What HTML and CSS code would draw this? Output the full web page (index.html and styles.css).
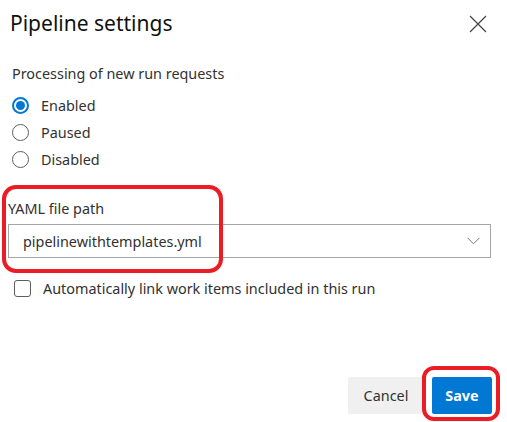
FILE: index.html
```html
<!DOCTYPE html>
<html>
<head>
<meta charset="utf-8">
<link rel="stylesheet" href="styles.css">
</head>
<body>
<div class="dialog">
  <div class="header">
    <h1 class="title">Pipeline settings</h1>
    <button class="close" aria-label="Close">
      <svg width="18" height="18" viewBox="0 0 18 18"><path d="M1 1 L17 17 M17 1 L1 17" stroke="#444" stroke-width="1.2" fill="none"/></svg>
    </button>
  </div>

  <div class="group">
    <div class="group-label">Processing of new run requests</div>
    <label class="radio-row"><span class="radio checked"></span>Enabled</label>
    <label class="radio-row"><span class="radio"></span>Paused</label>
    <label class="radio-row"><span class="radio"></span>Disabled</label>
  </div>

  <div class="field">
    <div class="field-label">YAML file path</div>
    <div class="select">
      <span class="select-value">pipelinewithtemplates.yml</span>
      <svg class="chevron" width="13" height="8" viewBox="0 0 13 8"><path d="M0.5 0.8 L6.5 6.8 L12.5 0.8" stroke="#777" stroke-width="1" fill="none"/></svg>
    </div>
  </div>

  <label class="check-row"><span class="checkbox"></span>Automatically link work items included in this run</label>

  <div class="footer">
    <button class="btn btn-secondary">Cancel</button>
    <button class="btn btn-primary">Save</button>
  </div>

  <div class="highlight highlight-field"></div>
  <div class="highlight highlight-save"></div>
</div>
</body>
</html>
```
FILE: styles.css
```css
* { box-sizing: border-box; }
html, body { margin: 0; padding: 0; background: #fff; }
body {
  font-family: "Noto Sans", "Open Sans", sans-serif;
  color: #323130;
  font-size: 14.4px;
}
.dialog {
  position: relative;
  width: 507px;
  height: 422px;
  overflow: hidden;
}
.header {
  display: flex;
  justify-content: space-between;
  align-items: flex-start;
  height: 48px;
  padding: 9px 20px 0 10px;
}
.title {
  margin: 0;
  font-size: 21px;
  line-height: 28px;
  font-weight: 400;
  color: #111;
}
.close {
  border: 0;
  background: none;
  padding: 0;
  margin-top: 6px;
  width: 18px;
  height: 18px;
  display: block;
}
.close svg { display: block; }
.group {
  padding-left: 12px;
  margin-top: 16px;
}
.group-label {
  line-height: 20px;
  margin-bottom: 8px;
}
.radio-row {
  display: flex;
  align-items: center;
  height: 27px;
}
.radio {
  width: 17px;
  height: 17px;
  border: 1px solid #605e5c;
  border-radius: 50%;
  margin-right: 12px;
  position: relative;
}
.radio.checked {
  border: 2px solid #0078d4;
}
.radio.checked::after {
  content: "";
  position: absolute;
  left: 2px; top: 2px;
  width: 9px; height: 9px;
  border-radius: 50%;
  background: #0078d4;
}
.field {
  padding: 0 16px 0 8px;
  margin-top: 26px;
}
.field-label {
  line-height: 20px;
  margin-bottom: 5px;
}
.select {
  height: 34px;
  border: 1px solid #a6a6a6;
  display: flex;
  align-items: center;
  justify-content: space-between;
  padding: 0 10px 0 14px;
}
.chevron { display: block; }
.check-row {
  display: flex;
  align-items: center;
  height: 20px;
  margin-top: 20px;
  padding-left: 14px;
}
.checkbox {
  width: 17px;
  height: 17px;
  border: 1px solid #605e5c;
  border-radius: 3px;
  margin-right: 12px;
}
.footer {
  display: flex;
  justify-content: flex-end;
  gap: 8px;
  padding-right: 15px;
  margin-top: 79px;
}
.btn {
  height: 37px;
  border: 0;
  font-family: inherit;
  font-size: 14.4px;
  padding: 0;
  border-radius: 2px;
}
.btn-secondary {
  width: 76px;
  background: #f0f0f0;
  color: #323130;
}
.btn-primary {
  width: 60px;
  background: #0078d4;
  color: #fff;
  font-weight: 700;
}
.highlight {
  position: absolute;
  border: 4px solid #ec1c24;
  border-radius: 14px;
  pointer-events: none;
}
.highlight-field {
  left: 2px; top: 185px;
  width: 221px; height: 88px;
}
.highlight-save {
  left: 422px; top: 366px;
  width: 78px; height: 55px;
  border-radius: 12px;
}
```
